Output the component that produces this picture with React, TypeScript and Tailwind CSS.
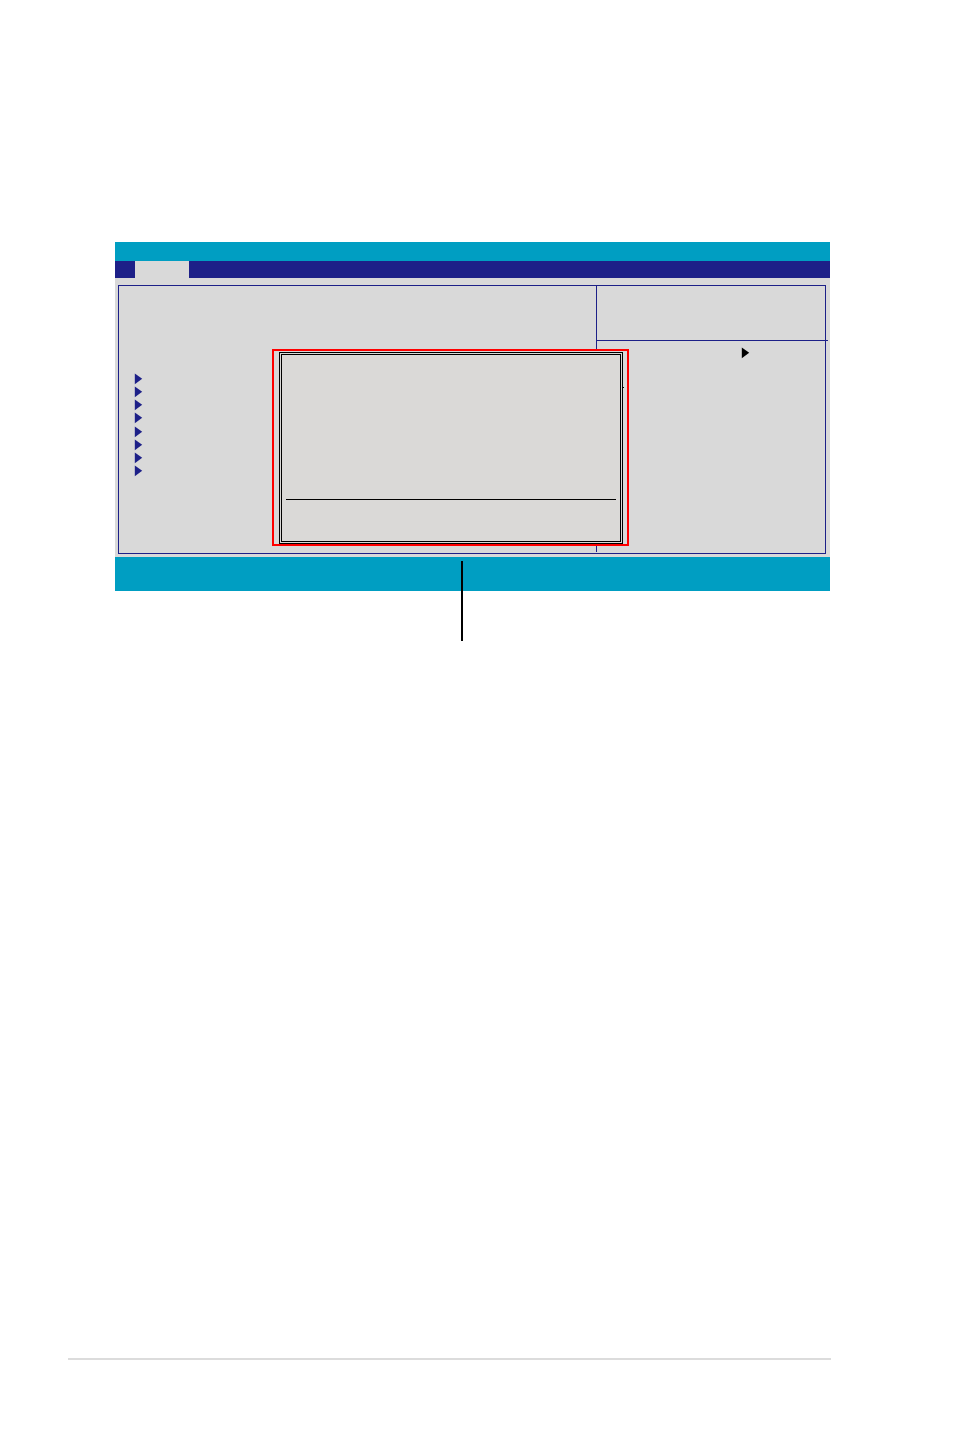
type ArrowProps = {
  className?: string;
};

function Arrow({ className = '' }: ArrowProps) {
  return (
    <svg viewBox="0 0 7 11" className={`block w-[7px] h-[11px] shrink-0 fill-current overflow-visible ${className}`} aria-hidden="true">
      <path d="M-0.2 0.4 L7.2 5.8 L-0.2 11.2 Z" />
    </svg>
  );
}

const submenus = [1, 2, 3, 4, 5, 6, 7, 8];

function PopupWindow() {
  return (
    <div className="absolute left-[157px] top-[107px] w-[357px] h-[197px] border-2 border-[#ff0000] bg-[#d9d9d9] pl-[5px] pr-1 pt-px flex">
      <div className="relative flex-1 border-[3px] border-double border-black bg-[#dad9d7] px-1 pb-[41px] flex flex-col justify-end">
        <div className="h-px bg-black" />
        {/* Tick on the frame edge */}
        <div className="absolute -right-1 top-8 w-px h-px bg-black" />
      </div>
    </div>
  );
}

function BiosScreen() {
  return (
    <section className="relative bg-[#d9d9d9]">
      {/* Title bar */}
      <header className="h-[19px] bg-[#009ec2]" />

      {/* Menu bar */}
      <nav className="h-[17px] bg-[#1d2088] pl-5 flex">
        <button type="button" className="w-[54px] bg-[#d9d9d9]" />
      </nav>

      {/* Body */}
      <div className="pt-[7px] pb-[3px] pl-[3px] pr-1">
        <div className="h-[269px] border border-[#1d2088] flex">
          <div className="flex-1 pl-4 pt-[87px]">
            <ul className="h-[103px] flex flex-col justify-between text-[#1d2088]">
              {submenus.map((item) => (
                <li key={item}>
                  <Arrow />
                </li>
              ))}
            </ul>
          </div>

          {/* Help column */}
          <aside className="w-[229px] mb-px border-l border-[#1d2088]">
            <div className="h-[55px] -mr-[3px] border-b border-[#1d2088]" />
            <div className="pt-1.5 pl-[145px]">
              <Arrow className="text-black" />
            </div>
          </aside>
        </div>
      </div>

      {/* Legend bar */}
      <footer className="h-[34px] bg-[#009ec2]" />

      <PopupWindow />

      {/* Callout line */}
      <div className="absolute left-[346px] top-[319px] w-0.5 h-20 bg-black" />
    </section>
  );
}

export default function App() {
  return (
    <div className="min-h-screen bg-white flex flex-col justify-between font-['Liberation_Sans',sans-serif]">
      <main className="pt-[242px] pl-[115px] pr-[124px]">
        <BiosScreen />
      </main>
      <div className="ml-[68px] mr-[123px] mb-[77px] h-0.5 bg-[#dcdcdc]" />
    </div>
  );
}
